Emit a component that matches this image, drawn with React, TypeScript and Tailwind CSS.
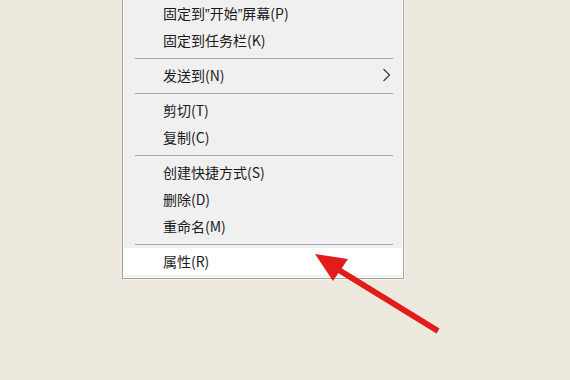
import React from 'react';

type Entry = { label: React.ReactNode; sub?: boolean; active?: boolean } | 'sep';

const q = (c: string) => <span className="font-['Liberation_Sans',sans-serif]">{c}</span>;

const ITEMS: Entry[] = [
  { label: <>固定到{q('”')}开始{q('”')}屏幕(P)</> },
  { label: '固定到任务栏(K)' },
  'sep',
  { label: '发送到(N)', sub: true },
  'sep',
  { label: '剪切(T)' },
  { label: '复制(C)' },
  'sep',
  { label: '创建快捷方式(S)' },
  { label: '删除(D)' },
  { label: '重命名(M)' },
  'sep',
  { label: '属性(R)', active: true },
];

export default function App() {
  return (
    <div className="relative w-[570px] h-[380px] overflow-hidden bg-[#ede9de] font-['Noto_Sans_CJK_SC','Noto_Sans',sans-serif]">
      {/* context menu, top is cut off by the screenshot */}
      <div className="ml-[122px] w-[282px] border border-t-0 border-[#a3a3a0] bg-[#f0f0f0] shadow-[1px_1px_0_#f7f5ee]">
        <div className="border-l border-r border-b border-white pb-[2px]">
          {ITEMS.map((it, i) =>
            it === 'sep' ? (
              <div key={i} className="h-[8px] flex items-center pl-[11px] pr-[9px]">
                <div className="h-px w-full bg-[#a8a8a8]" />
              </div>
            ) : (
              <div
                key={i}
                className={`h-[27px] flex items-center pl-[39px] pr-[11px] pb-[1px] text-[14px] text-[#1b1b1b] ${it.active ? 'bg-white' : ''}`}
              >
                <span className="flex-1 leading-none">{it.label}</span>
                {it.sub && (
                  <svg width="9" height="14" viewBox="0 0 9 14">
                    <path d="M1.5 1 L7.5 7 L1.5 13" fill="none" stroke="#333" strokeWidth="1.1" />
                  </svg>
                )}
              </div>
            )
          )}
        </div>
      </div>

      {/* red annotation arrow */}
      <svg className="absolute left-0 top-0 pointer-events-none" width="570" height="380" viewBox="0 0 570 380">
        <line x1="438" y1="331" x2="334" y2="267" stroke="#e21b1b" strokeWidth="6" strokeLinecap="butt" />
        <polygon points="315,254 348,259 333,281" fill="#e21b1b" />
      </svg>
    </div>
  );
}
